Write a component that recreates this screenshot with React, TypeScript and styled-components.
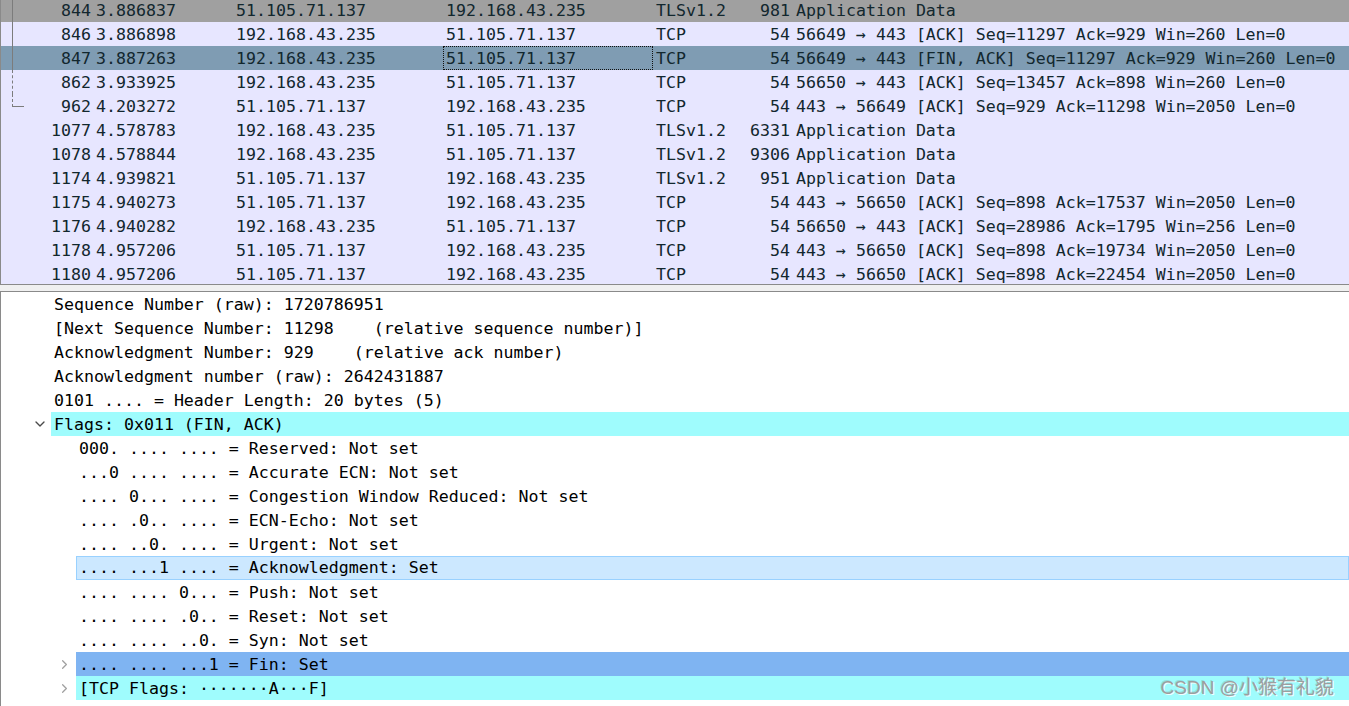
import React, { FC } from "react";
import styled, { createGlobalStyle, css } from "styled-components";
import { ChevronDown, ChevronRight } from "lucide-react";

const GlobalStyle = createGlobalStyle`
  html, body {
    margin: 0;
    padding: 0;
    background: #fff;
    overflow: hidden;
  }
  * {
    box-sizing: border-box;
  }
`;

type Tone = "gray" | "tcp" | "selected";
type Tree = "none" | "line" | "dashed" | "end";

interface Packet {
  no: number;
  time: string;
  src: string;
  dst: string;
  proto: string;
  len: number;
  info: string;
  tone: Tone;
  tree: Tree;
}

const packets: Packet[] = [
  { no: 844, time: "3.886837", src: "51.105.71.137", dst: "192.168.43.235", proto: "TLSv1.2", len: 981, info: "Application Data", tone: "gray", tree: "line" },
  { no: 846, time: "3.886898", src: "192.168.43.235", dst: "51.105.71.137", proto: "TCP", len: 54, info: "56649 → 443 [ACK] Seq=11297 Ack=929 Win=260 Len=0", tone: "tcp", tree: "line" },
  { no: 847, time: "3.887263", src: "192.168.43.235", dst: "51.105.71.137", proto: "TCP", len: 54, info: "56649 → 443 [FIN, ACK] Seq=11297 Ack=929 Win=260 Len=0", tone: "selected", tree: "line" },
  { no: 862, time: "3.933925", src: "192.168.43.235", dst: "51.105.71.137", proto: "TCP", len: 54, info: "56650 → 443 [ACK] Seq=13457 Ack=898 Win=260 Len=0", tone: "tcp", tree: "dashed" },
  { no: 962, time: "4.203272", src: "51.105.71.137", dst: "192.168.43.235", proto: "TCP", len: 54, info: "443 → 56649 [ACK] Seq=929 Ack=11298 Win=2050 Len=0", tone: "tcp", tree: "end" },
  { no: 1077, time: "4.578783", src: "192.168.43.235", dst: "51.105.71.137", proto: "TLSv1.2", len: 6331, info: "Application Data", tone: "tcp", tree: "none" },
  { no: 1078, time: "4.578844", src: "192.168.43.235", dst: "51.105.71.137", proto: "TLSv1.2", len: 9306, info: "Application Data", tone: "tcp", tree: "none" },
  { no: 1174, time: "4.939821", src: "51.105.71.137", dst: "192.168.43.235", proto: "TLSv1.2", len: 951, info: "Application Data", tone: "tcp", tree: "none" },
  { no: 1175, time: "4.940273", src: "51.105.71.137", dst: "192.168.43.235", proto: "TCP", len: 54, info: "443 → 56650 [ACK] Seq=898 Ack=17537 Win=2050 Len=0", tone: "tcp", tree: "none" },
  { no: 1176, time: "4.940282", src: "192.168.43.235", dst: "51.105.71.137", proto: "TCP", len: 54, info: "56650 → 443 [ACK] Seq=28986 Ack=1795 Win=256 Len=0", tone: "tcp", tree: "none" },
  { no: 1178, time: "4.957206", src: "51.105.71.137", dst: "192.168.43.235", proto: "TCP", len: 54, info: "443 → 56650 [ACK] Seq=898 Ack=19734 Win=2050 Len=0", tone: "tcp", tree: "none" },
  { no: 1180, time: "4.957206", src: "51.105.71.137", dst: "192.168.43.235", proto: "TCP", len: 54, info: "443 → 56650 [ACK] Seq=898 Ack=22454 Win=2050 Len=0", tone: "tcp", tree: "none" },
];

type Mark = "none" | "field" | "hover" | "selected";

interface Detail {
  text: string;
  level: 1 | 2;
  toggle?: "open" | "closed";
  mark?: Mark;
}

const details: Detail[] = [
  { text: "Sequence Number (raw): 1720786951", level: 1 },
  { text: "[Next Sequence Number: 11298    (relative sequence number)]", level: 1 },
  { text: "Acknowledgment Number: 929    (relative ack number)", level: 1 },
  { text: "Acknowledgment number (raw): 2642431887", level: 1 },
  { text: "0101 .... = Header Length: 20 bytes (5)", level: 1 },
  { text: "Flags: 0x011 (FIN, ACK)", level: 1, toggle: "open", mark: "field" },
  { text: "000. .... .... = Reserved: Not set", level: 2 },
  { text: "...0 .... .... = Accurate ECN: Not set", level: 2 },
  { text: ".... 0... .... = Congestion Window Reduced: Not set", level: 2 },
  { text: ".... .0.. .... = ECN-Echo: Not set", level: 2 },
  { text: ".... ..0. .... = Urgent: Not set", level: 2 },
  { text: ".... ...1 .... = Acknowledgment: Set", level: 2, mark: "hover" },
  { text: ".... .... 0... = Push: Not set", level: 2 },
  { text: ".... .... .0.. = Reset: Not set", level: 2 },
  { text: ".... .... ..0. = Syn: Not set", level: 2 },
  { text: ".... .... ...1 = Fin: Set", level: 2, toggle: "closed", mark: "selected" },
  { text: "[TCP Flags: ·······A···F]", level: 2, toggle: "closed", mark: "field" },
  { text: "Window: 260", level: 1 },
];

const App: FC = () => {
  return (
    <>
      <GlobalStyle />
      <Window>
        <PacketPane>
          <PacketList>
            {packets.map((p) => (
              <PacketRow key={p.no} tone={p.tone}>
                <NoCell tree={p.tree}>{p.no}</NoCell>
                <TimeCell>{p.time}</TimeCell>
                <AddrCell>{p.src}</AddrCell>
                <AddrCell focused={p.tone === "selected"}>{p.dst}</AddrCell>
                <ProtoCell>{p.proto}</ProtoCell>
                <LenCell>{p.len}</LenCell>
                <InfoCell>{p.info}</InfoCell>
              </PacketRow>
            ))}
          </PacketList>
        </PacketPane>
        <Splitter />
        <DetailPane>
          {details.map((d, i) => (
            <DetailRow key={i} level={d.level}>
              <Toggle>
                {d.toggle === "open" && <ChevronDown size={16} strokeWidth={2} color="#4a4a4a" />}
                {d.toggle === "closed" && <ChevronRight size={15} strokeWidth={2} color="#a0a0a0" />}
              </Toggle>
              <DetailText mark={d.mark || "none"}>{d.text}</DetailText>
            </DetailRow>
          ))}
          <Watermark>CSDN @小猴有礼貌</Watermark>
        </DetailPane>
      </Window>
    </>
  );
};

export default App;

const mono = `"DejaVu Sans Mono", "Liberation Mono", monospace`;

const Window = styled.div`
  display: flex;
  flex-direction: column;
  width: 1349px;
  height: 706px;
  overflow: hidden;
  font-family: ${mono};
  font-size: 16.6px;
  color: #12272e;
`;

const PacketPane = styled.div`
  height: 285px;
  flex: none;
  overflow: hidden;
  border-left: 1px solid #8a8a8a;
  border-bottom: 1px solid #8a8a8a;
  background: #e7e6ff;
`;

const PacketList = styled.div`
  display: flex;
  flex-direction: column;
  margin-top: -2px;
`;

const toneBg: Record<Tone, string> = {
  gray: "#a0a0a0",
  tcp: "#e7e6ff",
  selected: "#7f9cb3",
};

const PacketRow = styled.div<{ tone: Tone }>`
  display: flex;
  height: 24px;
  line-height: 24px;
  white-space: pre;
  background: ${(p) => toneBg[p.tone]};
`;

const Cell = styled.div`
  height: 24px;
  flex: none;
  overflow: hidden;
  padding-top: 1px;
`;

const treeLine = "#7c7c7c";

const NoCell = styled(Cell)<{ tree: Tree }>`
  position: relative;
  width: 91px;
  padding-right: 1px;
  text-align: right;
  &::before {
    content: "";
    position: absolute;
    left: 11px;
    top: 0;
    display: ${(p) => (p.tree === "none" ? "none" : "block")};
    ${(p) =>
      p.tree === "line" &&
      css`
        height: 24px;
        border-left: 1px solid ${treeLine};
      `}
    ${(p) =>
      p.tree === "dashed" &&
      css`
        height: 24px;
        border-left: 1px dashed ${treeLine};
      `}
    ${(p) =>
      p.tree === "end" &&
      css`
        height: 12px;
        width: 11px;
        border-left: 1px dashed ${treeLine};
        border-bottom: 1px solid ${treeLine};
      `}
  }
`;

const TimeCell = styled(Cell)`
  width: 141px;
  padding-left: 4px;
`;

const AddrCell = styled(Cell)<{ focused?: boolean }>`
  width: 210px;
  padding-left: 3px;
  ${(p) =>
    p.focused &&
    css`
      outline: 1px dotted #111;
      outline-offset: -1px;
    `}
`;

const ProtoCell = styled(Cell)`
  width: 80px;
  padding-left: 3px;
`;

const LenCell = styled(Cell)`
  width: 60px;
  padding-right: 3px;
  text-align: right;
`;

const InfoCell = styled(Cell)`
  flex: 1;
  padding-left: 3px;
`;

const Splitter = styled.div`
  height: 6px;
  flex: none;
  background: #f0f0f0;
`;

const DetailPane = styled.div`
  position: relative;
  flex: 1;
  display: flex;
  flex-direction: column;
  border-left: 1px solid #8a8a8a;
  border-top: 1px solid #8a8a8a;
  background: #fff;
  color: #000;
`;

const DetailRow = styled.div<{ level: 1 | 2 }>`
  display: flex;
  align-items: stretch;
  height: 24px;
  flex: none;
  padding-left: ${(p) => (p.level === 1 ? 27 : 52)}px;
`;

const Toggle = styled.div`
  width: 23px;
  flex: none;
  display: flex;
  align-items: center;
  justify-content: center;
`;

const markStyles: Record<Mark, ReturnType<typeof css>> = {
  none: css``,
  field: css`
    background: #9ffcfd;
  `,
  hover: css`
    background: #cce8ff;
    border: 1px solid #99d1ff;
  `,
  selected: css`
    background: #7fb4f2;
  `,
};

const DetailText = styled.div<{ mark: Mark }>`
  flex: 1;
  padding-left: 3px;
  padding-top: 1px;
  line-height: 23px;
  white-space: pre;
  ${(p) => markStyles[p.mark]}
  ${(p) =>
    p.mark === "hover" &&
    css`
      padding-left: 2px;
      padding-top: 0;
      line-height: 22px;
    `}
`;

const Watermark = styled.div`
  position: absolute;
  right: 15px;
  top: 384px;
  font-family: "Liberation Sans", "Noto Sans CJK SC", sans-serif;
  font-size: 19px;
  line-height: 24px;
  color: #9e9e9e;
  text-shadow: 1px 1px 0 rgba(255, 255, 255, 0.85), -1px -1px 0 rgba(90, 90, 90, 0.2);
  pointer-events: none;
`;
